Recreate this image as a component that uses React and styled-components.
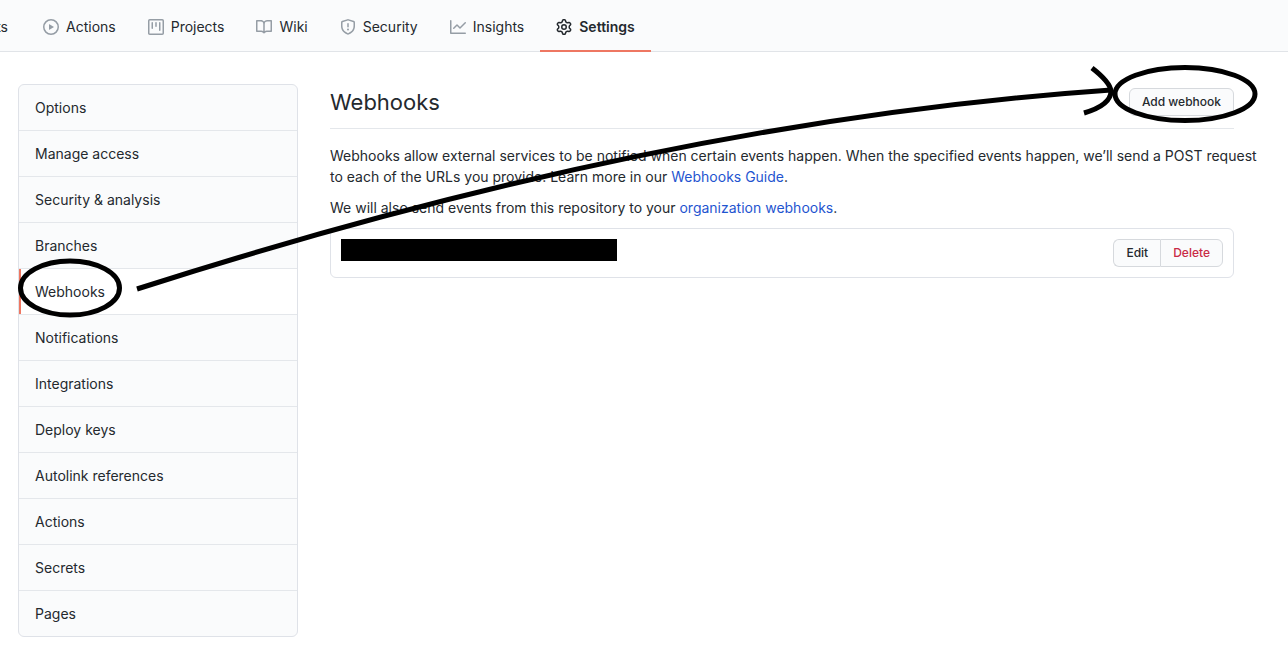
import styled, { createGlobalStyle } from 'styled-components'

const TABS = [
  { label: 'Actions', icon: PlayIcon },
  { label: 'Projects', icon: ProjectIcon },
  { label: 'Wiki', icon: BookIcon },
  { label: 'Security', icon: ShieldIcon },
  { label: 'Insights', icon: GraphIcon },
  { label: 'Settings', icon: GearIcon, active: true },
]

const MENU = [
  'Options',
  'Manage access',
  'Security & analysis',
  'Branches',
  'Webhooks',
  'Notifications',
  'Integrations',
  'Deploy keys',
  'Autolink references',
  'Actions',
  'Secrets',
  'Pages',
]

export default function App() {
  return (
    <Page>
      <GlobalStyle />
      <RepoNav aria-label="Repository">
        <CutTab href="#pulls">Pull requests</CutTab>
        {TABS.map(({ label, icon: TabIcon, active }) => (
          <Tab key={label} href={`#${label.toLowerCase()}`} $active={active}>
            <TabIcon />
            {label}
          </Tab>
        ))}
      </RepoNav>
      <Layout>
        <Menu aria-label="Settings">
          {MENU.map((label) => (
            <MenuItem key={label} href="#settings" $active={label === 'Webhooks'}>
              {label}
            </MenuItem>
          ))}
        </Menu>
        <Main>
          <Subhead>
            <Title>Webhooks</Title>
            <Button type="button">Add webhook</Button>
          </Subhead>
          <Text>
            Webhooks allow external services to be notified when certain events
            happen. When the specified events happen, we’ll send a POST request
            to each of the URLs you provide. Learn more in our{' '}
            <Link href="#guide">Webhooks Guide</Link>.
          </Text>
          <Text>
            We will also send events from this repository to your{' '}
            <Link href="#organization">organization webhooks</Link>.
          </Text>
          <HookRow>
            <Redacted />
            <ButtonGroup>
              <Button type="button">Edit</Button>
              <Button type="button" $danger>
                Delete
              </Button>
            </ButtonGroup>
          </HookRow>
        </Main>
      </Layout>
      <Annotations />
    </Page>
  )
}

function Annotations() {
  return (
    <Overlay width="1288" height="670" viewBox="0 0 1288 670" aria-hidden="true">
      <ellipse cx="70" cy="288" rx="49.5" ry="27" />
      <ellipse cx="1185" cy="94" rx="70" ry="26.5" />
      <path d="M137 289Q660 121 1111 90" />
      <path d="M1092 68Q1110 82 1111 91Q1111 105 1084 113" />
    </Overlay>
  )
}

function PlayIcon() {
  return (
    <Icon viewBox="0 0 16 16">
      <path d="M1.5 8a6.5 6.5 0 1113 0 6.5 6.5 0 01-13 0zM8 0a8 8 0 100 16A8 8 0 008 0zM6.379 5.227A.25.25 0 006 5.442v5.117a.25.25 0 00.379.214l4.264-2.559a.25.25 0 000-.428L6.379 5.227z" />
    </Icon>
  )
}

function ProjectIcon() {
  return (
    <Icon viewBox="0 0 16 16">
      <path d="M1.75 0A1.75 1.75 0 000 1.75v12.5C0 15.216.784 16 1.75 16h12.5A1.75 1.75 0 0016 14.25V1.75A1.75 1.75 0 0014.25 0H1.75zM1.5 1.75a.25.25 0 01.25-.25h12.5a.25.25 0 01.25.25v12.5a.25.25 0 01-.25.25H1.75a.25.25 0 01-.25-.25V1.75zM11.75 3a.75.75 0 00-.75.75v7.5a.75.75 0 001.5 0v-7.5a.75.75 0 00-.75-.75zm-8.25.75a.75.75 0 011.5 0v5.5a.75.75 0 01-1.5 0v-5.5zM8 3a.75.75 0 00-.75.75v3.5a.75.75 0 001.5 0v-3.5A.75.75 0 008 3z" />
    </Icon>
  )
}

function BookIcon() {
  return (
    <Icon viewBox="0 0 16 16">
      <path d="M0 1.75A.75.75 0 01.75 1h4.253c1.227 0 2.317.59 3 1.501A3.744 3.744 0 0111.006 1h4.245a.75.75 0 01.75.75v10.5a.75.75 0 01-.75.75h-4.507a2.25 2.25 0 00-1.591.659l-.622.621a.75.75 0 01-1.06 0l-.622-.621A2.25 2.25 0 005.258 13H.75a.75.75 0 01-.75-.75V1.75zm8.755 3a2.25 2.25 0 012.25-2.25H14.5v9h-3.757c-.71 0-1.4.201-1.992.572l.004-7.322zm-1.504 7.324l.004-5.073-.002-2.253A2.25 2.25 0 005.003 2.5H1.5v9h3.757a3.75 3.75 0 011.994.574z" />
    </Icon>
  )
}

function ShieldIcon() {
  return (
    <Icon viewBox="0 0 16 16">
      <path d="M7.467.133a1.75 1.75 0 011.066 0l5.25 1.68A1.75 1.75 0 0115 3.48V7c0 1.566-.32 3.182-1.303 4.682-.983 1.498-2.585 2.813-5.032 3.855a1.7 1.7 0 01-1.33 0c-2.447-1.042-4.049-2.357-5.032-3.855C1.32 10.182 1 8.566 1 7V3.48a1.75 1.75 0 011.217-1.667l5.25-1.68zm.61 1.429a.25.25 0 00-.153 0l-5.25 1.68a.25.25 0 00-.174.238V7c0 1.358.275 2.666 1.057 3.86.784 1.194 2.121 2.34 4.366 3.297a.2.2 0 00.154 0c2.245-.956 3.582-2.104 4.366-3.298C13.225 9.666 13.5 8.36 13.5 7V3.48a.25.25 0 00-.174-.237l-5.25-1.68zM9 10.5a1 1 0 11-2 0 1 1 0 012 0zm-.25-5.75a.75.75 0 10-1.5 0v3a.75.75 0 001.5 0v-3z" />
    </Icon>
  )
}

function GraphIcon() {
  return (
    <Icon viewBox="0 0 16 16">
      <path d="M1.5 1.75a.75.75 0 00-1.5 0v12.5c0 .414.336.75.75.75h14.5a.75.75 0 000-1.5H1.5V1.75zm14.28 2.53a.75.75 0 00-1.06-1.06L10 7.94 7.53 5.47a.75.75 0 00-1.06 0L3.22 8.72a.75.75 0 001.06 1.06L7 7.06l2.47 2.47a.75.75 0 001.06 0l5.25-5.25z" />
    </Icon>
  )
}

function GearIcon() {
  return (
    <Icon viewBox="0 0 16 16">
      <path d="M7.429 1.525a6.593 6.593 0 011.142 0c.036.003.108.036.137.146l.289 1.105c.147.56.55.967.997 1.189.174.086.341.183.501.29.417.278.97.423 1.53.27l1.102-.303c.11-.03.175.016.195.046.219.31.41.641.573.989.014.031.022.11-.059.19l-.815.806c-.411.406-.562.957-.53 1.456a4.588 4.588 0 010 .582c-.032.499.119 1.05.53 1.456l.815.806c.08.08.073.159.059.19a6.494 6.494 0 01-.573.99c-.02.029-.086.074-.195.045l-1.103-.303c-.559-.153-1.112-.008-1.529.27-.16.107-.327.204-.5.29-.449.222-.851.628-.998 1.189l-.289 1.105c-.029.11-.101.143-.137.146a6.613 6.613 0 01-1.142 0c-.036-.003-.108-.037-.137-.146l-.289-1.105c-.147-.56-.55-.967-.997-1.189a4.502 4.502 0 01-.501-.29c-.417-.278-.97-.423-1.53-.27l-1.102.303c-.11.03-.175-.016-.195-.046a6.492 6.492 0 01-.573-.989c-.014-.031-.022-.11.059-.19l.815-.806c.411-.406.562-.957.53-1.456a4.587 4.587 0 010-.582c.032-.499-.119-1.05-.53-1.456l-.815-.806c-.08-.08-.073-.159-.059-.19a6.44 6.44 0 01.573-.99c.02-.029.086-.075.195-.045l1.103.303c.559.153 1.112.008 1.529-.27.16-.107.327-.204.5-.29.449-.222.851-.628.998-1.189l.289-1.105c.029-.11.101-.143.137-.146zM8 0c-.236 0-.47.01-.701.03-.743.065-1.29.615-1.458 1.261l-.29 1.106c-.017.066-.078.158-.211.224a5.994 5.994 0 00-.668.386c-.123.082-.233.09-.3.071L3.27 2.776c-.644-.177-1.392.02-1.82.63a7.977 7.977 0 00-.704 1.217c-.315.675-.111 1.422.363 1.891l.815.806c.05.048.098.147.088.294a6.084 6.084 0 000 .772c.01.147-.038.246-.088.294l-.815.806c-.474.469-.678 1.216-.363 1.891.2.428.436.835.704 1.218.428.609 1.176.806 1.82.63l1.103-.303c.066-.019.176-.011.299.071.213.143.436.272.668.386.133.066.194.158.212.224l.289 1.106c.169.646.715 1.196 1.458 1.26a8.094 8.094 0 001.402 0c.743-.064 1.29-.614 1.458-1.26l.29-1.106c.017-.066.078-.158.211-.224a5.98 5.98 0 00.668-.386c.123-.082.233-.09.3-.071l1.102.302c.644.177 1.392-.02 1.82-.63.268-.382.505-.789.704-1.217.315-.675.111-1.422-.364-1.891l-.814-.806c-.05-.048-.098-.147-.088-.294a6.1 6.1 0 000-.772c-.01-.147.039-.246.088-.294l.814-.806c.475-.469.679-1.216.364-1.891a7.992 7.992 0 00-.704-1.218c-.428-.609-1.176-.806-1.82-.63l-1.103.303c-.066.019-.176.011-.299-.071a5.991 5.991 0 00-.668-.386c-.133-.066-.194-.158-.212-.224L10.16 1.29C9.99.645 9.444.095 8.701.031A8.094 8.094 0 008 0zm1.5 8a1.5 1.5 0 11-3 0 1.5 1.5 0 013 0zM11 8a3 3 0 11-6 0 3 3 0 016 0z" />
    </Icon>
  )
}

const GlobalStyle = createGlobalStyle`
  * {
    box-sizing: border-box;
  }

  body {
    background-color: #fff;
    color: #24292e;
    font-family: Inter, 'Liberation Sans', sans-serif;
    font-size: 14px;
    line-height: 21px;
    margin: 0;
  }
`

const Page = styled.div`
  overflow-x: hidden;
  position: relative;
`

const RepoNav = styled.nav`
  background-color: #fafbfc;
  border-bottom: 1px solid #e1e4e8;
  display: flex;
  height: 52px;
`

const Tab = styled.a`
  align-items: center;
  border-bottom: 2px solid ${(props) => (props.$active ? '#ee7762' : 'transparent')};
  color: #24292e;
  display: flex;
  flex-shrink: 0;
  font-weight: ${(props) => (props.$active ? 600 : 400)};
  gap: 7px;
  height: 52px;
  padding: 3px 16px 0;
  text-decoration: none;
  white-space: nowrap;

  svg {
    fill: ${(props) => (props.$active ? '#24292e' : '#959da5')};
  }
`

/* first tab, scrolled past the left edge of the window */
const CutTab = styled(Tab)`
  justify-content: flex-end;
  margin-right: 3px;
  padding-left: 0;
  width: 24px;
`

const Icon = styled.svg`
  fill-rule: evenodd;
  flex-shrink: 0;
  height: 16px;
  width: 16px;
`

const Layout = styled.div`
  align-items: flex-start;
  display: flex;
  gap: 32px;
  padding: 32px 54px 32px 18px;
`

const Menu = styled.nav`
  background-color: #fafbfc;
  border: 1px solid #dfe2e8;
  border-radius: 6px;
  flex: 0 0 280px;
  overflow: hidden;
`

const MenuItem = styled.a`
  background-color: ${(props) => (props.$active ? '#fff' : 'transparent')};
  border-bottom: 1px solid #e4e7eb;
  box-shadow: ${(props) => (props.$active ? 'inset 2px 0 #ee7762' : 'none')};
  color: #24292e;
  display: block;
  padding: 12px 16px;
  text-decoration: none;

  &:last-child {
    border-bottom: 0;
  }
`

const Main = styled.main`
  flex: 1;
  min-width: 0;
`

const Subhead = styled.header`
  align-items: center;
  border-bottom: 1px solid #e4e7eb;
  display: flex;
  justify-content: space-between;
  margin-bottom: 16px;
  padding-bottom: 8px;
`

const Title = styled.h1`
  font-size: 22px;
  font-weight: 400;
  line-height: 36px;
  margin: 0;
`

/* runs a little into the page gutter */
const Text = styled.p`
  margin: 0 -32px 10px 0;
`

const Link = styled.a`
  color: #1f55d0;
  text-decoration: none;
`

const Button = styled.button`
  background-color: #fafbfc;
  border: 1px solid #d6d9dd;
  border-radius: 6px;
  color: ${(props) => (props.$danger ? '#c92a45' : '#24292e')};
  cursor: pointer;
  font-family: inherit;
  font-size: 12px;
  font-weight: 500;
  height: 28px;
  line-height: 20px;
  padding: 3px 12px;
`

const ButtonGroup = styled.div`
  display: flex;

  ${Button}:first-child {
    border-radius: 6px 0 0 6px;
    border-right: 0;
  }

  ${Button}:last-child {
    border-radius: 0 6px 6px 0;
  }
`

const HookRow = styled.div`
  align-items: flex-start;
  border: 1px solid #dfe2e8;
  border-radius: 6px;
  display: flex;
  justify-content: space-between;
  padding: 10px;
`

const Redacted = styled.div`
  background-color: #000;
  height: 22px;
  width: 276px;
`

const Overlay = styled.svg`
  fill: none;
  left: 0;
  pointer-events: none;
  position: absolute;
  stroke: #000;
  stroke-width: 5px;
  top: 0;
`
